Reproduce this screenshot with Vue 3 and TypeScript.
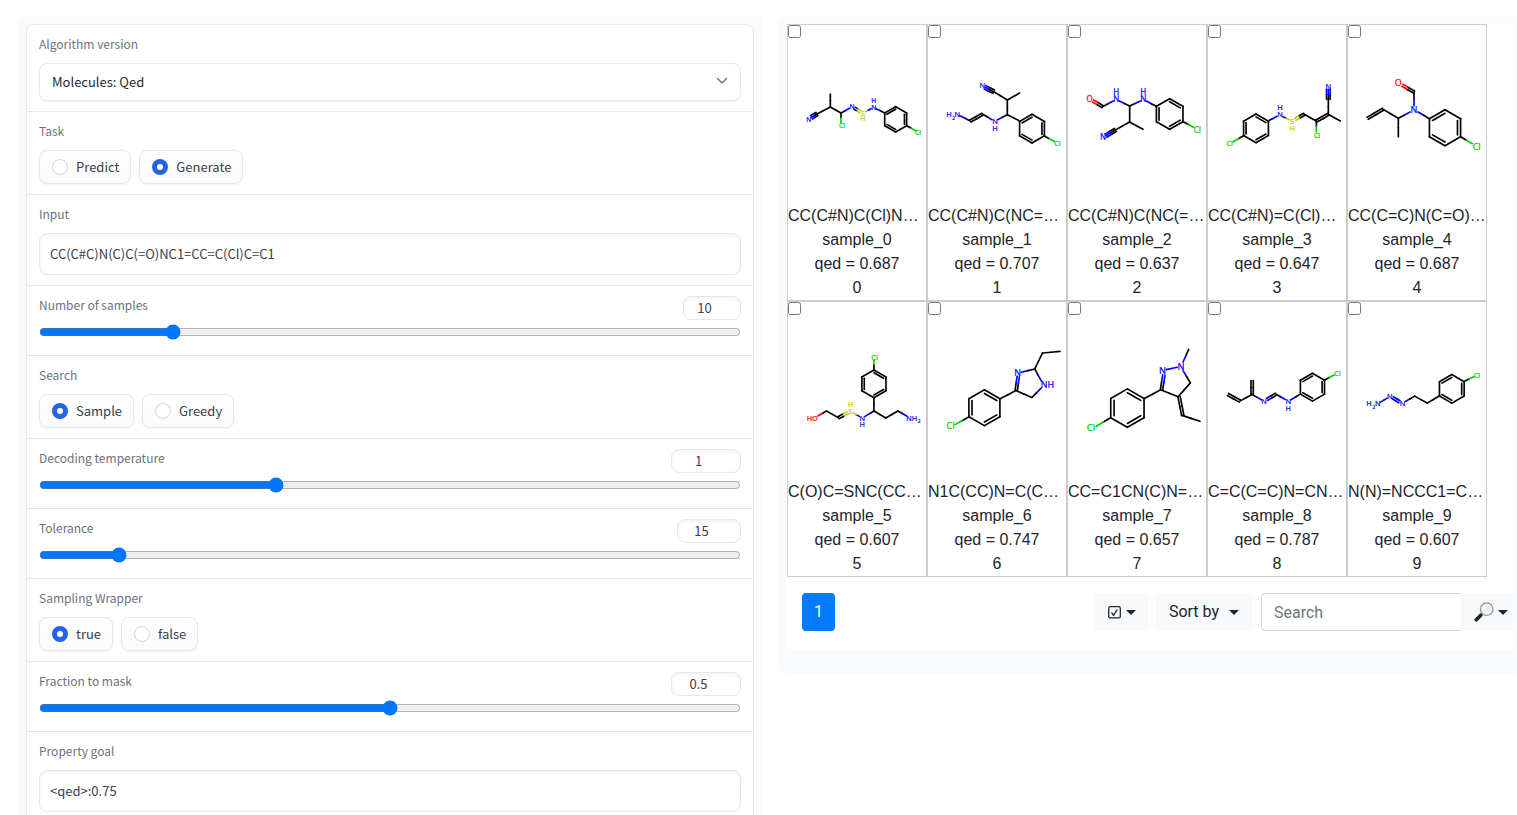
<script setup lang="ts">
import { reactive } from 'vue'

type Colour = 'k' | 'b' | 'g' | 'r' | 'y'
/** order, x1, y1, x2, y2, colour of the first half, colour of the second half */
type Bond = [number, number, number, number, number, Colour?, Colour?]
/** x, y of the centre, text, colour */
type Atom = [number, number, string, Colour]
/** centre x, centre y, radius, parity of the double-bonded edges */
type Ring = [number, number, number, number]

interface Molecule {
  smiles: string
  qed: string
  origin: string
  size: number
  ring: Ring
  bonds: Bond[]
  atoms: Atom[]
}

interface Line { x1: number; y1: number; x2: number; y2: number; c: Colour }

const molecules: Molecule[] = [
  {
    smiles: 'CC(C#N)C(Cl)NC1=CC=C(Cl)C=C1', qed: '0.687', origin: '3 15', size: 20, ring: [326, 298, 38, 1],
    bonds: [
      [1, 130, 222, 130, 261], [1, 130, 261, 90, 282], [3, 90, 282, 73, 292, 'k', 'b'], [1, 130, 261, 162, 279],
      [1, 162, 279, 187, 265, 'k', 'b'], [1, 162, 279, 162, 308, 'k', 'g'], [2, 203, 265, 220, 275, 'b', 'y'],
      [1, 236, 275, 252, 266, 'y', 'b'], [1, 268, 266, 293, 279, 'b', 'k'], [1, 359, 317, 386, 332, 'k', 'g'],
    ],
    atoms: [[65, 298, 'N', 'b'], [165, 317, 'Cl', 'g'], [195, 261, 'N', 'b'], [228, 280, 'S', 'y'], [228, 297, 'H', 'y'], [260, 262, 'N', 'b'], [260, 243, 'H', 'b'], [393, 337, 'Cl', 'g']],
  },
  {
    smiles: 'CC(C#N)C(NC=CN)C1=CC=C(Cl)C=C1', qed: '0.707', origin: '423 15', size: 22, ring: [735, 326, 43, 1],
    bonds: [
      [3, 594, 202, 620, 215, 'b', 'k'], [1, 620, 215, 661, 240], [1, 661, 240, 698, 219], [1, 661, 240, 661, 284],
      [1, 661, 284, 698, 303], [1, 661, 284, 632, 299, 'k', 'b'], [1, 615, 299, 586, 282, 'b', 'k'], [2, 586, 283, 550, 303],
      [1, 550, 303, 518, 287, 'k', 'b'], [1, 772, 348, 802, 364, 'k', 'g'],
    ],
    atoms: [[586, 197, 'N', 'b'], [624, 304, 'N', 'b'], [624, 326, 'H', 'b'], [486, 283, 'H', 'b'], [500, 295, '2', 'b'], [511, 283, 'N', 'b'], [811, 371, 'Cl', 'g']],
  },
  {
    smiles: 'CC(C#N)C(NC(=O))NC1=CC=C(Cl)C=C1', qed: '0.637', origin: '3 15', size: 24, ring: [308, 282, 46, 0],
    bonds: [
      [2, 78, 243, 107, 260, 'r', 'k'], [1, 107, 260, 139, 243, 'k', 'b'], [1, 157, 243, 188, 258, 'b', 'k'],
      [1, 188, 258, 188, 306], [1, 188, 306, 228, 328], [1, 188, 306, 145, 330], [3, 145, 330, 117, 347, 'k', 'b'],
      [1, 188, 258, 220, 243, 'k', 'b'], [1, 238, 243, 268, 259, 'b', 'k'], [1, 349, 305, 380, 322, 'k', 'g'],
    ],
    atoms: [[68, 238, 'O', 'r'], [148, 238, 'N', 'b'], [148, 215, 'H', 'b'], [229, 238, 'N', 'b'], [229, 215, 'H', 'b'], [108, 352, 'N', 'b'], [391, 330, 'Cl', 'g']],
  },
  {
    smiles: 'CC(C#N)=C(Cl)C=SNC1=CC=C(Cl)C=C1', qed: '0.647', origin: '423 15', size: 22, ring: [567, 325, 43, 0],
    bonds: [
      [1, 603, 303, 630, 289, 'k', 'b'], [1, 648, 290, 667, 299, 'b', 'y'], [2, 685, 298, 712, 283, 'y', 'k'],
      [1, 712, 283, 748, 303], [2, 748, 303, 784, 283], [1, 784, 283, 820, 303], [1, 784, 283, 784, 238],
      [3, 784, 238, 784, 208, 'k', 'b'], [1, 748, 303, 748, 335, 'k', 'g'], [1, 530, 347, 498, 365, 'k', 'g'],
    ],
    atoms: [[639, 284, 'N', 'b'], [639, 263, 'H', 'b'], [676, 303, 'S', 'y'], [676, 324, 'H', 'y'], [784, 199, 'N', 'b'], [750, 345, 'Cl', 'g'], [488, 369, 'Cl', 'g']],
  },
  {
    smiles: 'CC(C=C)N(C=O)C1=CC=C(Cl)C=C1', qed: '0.687', origin: '24 15', size: 27, ring: [315, 323, 54, 1],
    bonds: [
      [2, 187, 196, 222, 216, 'r', 'k'], [1, 222, 216, 222, 257, 'k', 'b'], [1, 210, 276, 175, 295, 'b', 'k'],
      [1, 175, 295, 175, 350], [1, 175, 295, 129, 268], [2, 129, 268, 83, 295], [1, 234, 276, 268, 296, 'b', 'k'],
      [1, 362, 350, 397, 371, 'k', 'g'],
    ],
    atoms: [[175, 189, 'O', 'r'], [222, 269, 'N', 'b'], [410, 379, 'Cl', 'g']],
  },
  {
    smiles: 'C(O)C=SNC(CCN)C1=CC=C(Cl)C=C1', qed: '0.607', origin: '3 21', size: 22, ring: [261, 268, 42, 0],
    bonds: [
      [1, 261, 197, 261, 227, 'g', 'k'], [1, 261, 309, 261, 350], [1, 261, 350, 234, 366, 'k', 'b'],
      [1, 217, 366, 199, 356, 'b', 'y'], [2, 181, 356, 154, 370, 'y', 'k'], [1, 154, 370, 118, 350],
      [1, 118, 350, 92, 365, 'k', 'r'], [1, 261, 350, 297, 371], [1, 297, 371, 333, 350], [1, 333, 350, 360, 365, 'k', 'b'],
    ],
    atoms: [[263, 187, 'Cl', 'g'], [226, 371, 'N', 'b'], [226, 391, 'H', 'b'], [190, 351, 'S', 'y'], [190, 331, 'H', 'y'], [75, 371, 'HO', 'r'], [375, 371, 'NH', 'b'], [397, 382, '2', 'b']],
  },
  {
    smiles: 'N1C(CC)N=C(C2=CC=C(Cl)C=C2)C1', qed: '0.747', origin: '423 21', size: 27, ring: [592, 340, 54, 0],
    bonds: [
      [1, 703, 233, 744, 223, 'b', 'k'], [1, 744, 223, 767, 175], [1, 767, 175, 820, 170], [1, 744, 223, 764, 260, 'k', 'b'],
      [1, 763, 281, 735, 309, 'b', 'k'], [1, 735, 309, 687, 288], [2, 688, 288, 694, 246, 'k', 'b'], [1, 687, 288, 639, 313],
      [1, 546, 367, 503, 391, 'k', 'g'],
    ],
    atoms: [[692, 234, 'N', 'b'], [782, 271, 'NH', 'b'], [490, 395, 'Cl', 'g']],
  },
  {
    smiles: 'CC=C1CN(C)N=C1C2=CC=C(Cl)C=C2', qed: '0.657', origin: '3 21', size: 28, ring: [181, 341, 58, 0],
    bonds: [
      [1, 366, 164, 349, 202, 'k', 'b'], [1, 298, 225, 331, 218, 'b', 'b'], [1, 349, 228, 371, 265, 'b', 'k'],
      [1, 371, 265, 334, 307], [1, 334, 307, 281, 286], [2, 284, 286, 291, 241, 'k', 'b'], [1, 281, 286, 232, 312],
      [2, 337, 307, 348, 363], [1, 346, 363, 400, 381], [1, 130, 370, 87, 396, 'k', 'g'],
    ],
    atoms: [[287, 228, 'N', 'b'], [343, 215, 'N', 'b'], [71, 401, 'Cl', 'g']],
  },
  {
    smiles: 'C=C(C=C)N=CNC1=CC=C(Cl)C=C1', qed: '0.787', origin: '423 21', size: 22, ring: [737, 278, 42, 1],
    bonds: [
      [2, 482, 300, 518, 320], [1, 518, 320, 555, 300], [2, 555, 300, 555, 258], [1, 555, 300, 583, 316, 'k', 'b'],
      [2, 600, 315, 627, 299, 'b', 'k'], [1, 627, 299, 655, 315, 'k', 'b'], [1, 672, 316, 700, 299, 'b', 'k'],
      [1, 773, 257, 802, 241, 'k', 'g'],
    ],
    atoms: [[591, 322, 'N', 'b'], [664, 321, 'N', 'b'], [664, 341, 'H', 'b'], [812, 237, 'Cl', 'g']],
  },
  {
    smiles: 'N(N)=NCCC1=CC=C(Cl)C=C1', qed: '0.607', origin: '24 21', size: 22, ring: [336, 283, 43, 1],
    bonds: [
      [1, 121, 323, 141, 311, 'b', 'b'], [2, 158, 310, 178, 322, 'b', 'b'], [1, 196, 321, 224, 305, 'b', 'k'],
      [1, 224, 305, 262, 326], [1, 262, 326, 299, 304], [1, 373, 261, 403, 246, 'k', 'g'],
    ],
    atoms: [[86, 328, 'H', 'b'], [101, 340, '2', 'b'], [113, 328, 'N', 'b'], [149, 305, 'N', 'b'], [187, 327, 'N', 'b'], [412, 242, 'Cl', 'g']],
  },
]

function bondLines([order, x1, y1, x2, y2, a = 'k', b = a]: Bond): Line[] {
  const length = Math.hypot(x2 - x1, y2 - y1)
  const nx = -(y2 - y1) / length
  const ny = (x2 - x1) / length
  const shifts = order === 1 ? [0] : order === 2 ? [-3.5, 3.5] : [-5.5, 0, 5.5]
  return shifts.flatMap((s) => {
    const mx = (x1 + x2) / 2
    const my = (y1 + y2) / 2
    return [
      { x1: x1 + nx * s, y1: y1 + ny * s, x2: mx + nx * s, y2: my + ny * s, c: a },
      { x1: mx + nx * s, y1: my + ny * s, x2: x2 + nx * s, y2: y2 + ny * s, c: b },
    ]
  })
}

function ringLines([cx, cy, r, parity]: Ring): Line[] {
  const vertex = (i: number, k: number) => {
    const t = (i * Math.PI) / 3
    return [cx + Math.sin(t) * r * k, cy - Math.cos(t) * r * k]
  }
  const lines: Line[] = []
  for (let i = 0; i < 6; i++) {
    for (const k of i % 2 === parity ? [1, 0.8] : [1]) {
      const [x1, y1] = vertex(i, k)
      const [x2, y2] = vertex(i + 1, k)
      lines.push({ x1, y1, x2, y2, c: 'k' })
    }
  }
  return lines
}

const drawings = molecules.map((m) => [...ringLines(m.ring), ...m.bonds.flatMap(bondLines)])

const form = reactive({
  version: 'Molecules: Qed',
  task: 'Generate',
  input: 'CC(C#C)N(C)C(=O)NC1=CC=C(Cl)C=C1',
  samples: 10,
  search: 'Sample',
  temperature: 1,
  tolerance: 15,
  wrapper: 'true',
  fraction: 0.5,
  goal: '<qed>:0.75',
  query: '',
})

type Field =
  | { kind: 'radio'; key: 'task' | 'search' | 'wrapper'; label: string; options: string[] }
  | { kind: 'range'; key: 'samples' | 'temperature' | 'tolerance' | 'fraction'; label: string; min: number; max: number; step: number; size: string }
  | { kind: 'text'; key: 'input' | 'goal'; label: string }

const fields: Field[] = [
  { kind: 'radio', key: 'task', label: 'Task', options: ['Predict', 'Generate'] },
  { kind: 'text', key: 'input', label: 'Input' },
  { kind: 'range', key: 'samples', label: 'Number of samples', min: 1, max: 50, step: 1, size: 'small' },
  { kind: 'radio', key: 'search', label: 'Search', options: ['Sample', 'Greedy'] },
  { kind: 'range', key: 'temperature', label: 'Decoding temperature', min: 0.5, max: 2, step: 0.1, size: 'large' },
  { kind: 'range', key: 'tolerance', label: 'Tolerance', min: 5, max: 100, step: 1, size: 'medium' },
  { kind: 'radio', key: 'wrapper', label: 'Sampling Wrapper', options: ['true', 'false'] },
  { kind: 'range', key: 'fraction', label: 'Fraction to mask', min: 0, max: 1, step: 0.1, size: 'large' },
  { kind: 'text', key: 'goal', label: 'Property goal' },
]
</script>

<template>
  <main class="page">
    <section class="panel settings">
      <form class="card" @submit.prevent>
        <div class="block">
          <label class="caption" for="version">Algorithm version</label>
          <div class="select-wrap">
            <select id="version" v-model="form.version" class="select">
              <option>Molecules: Qed</option>
            </select>
            <svg class="chevron" viewBox="0 0 12 8" aria-hidden="true"><path d="M1.5 1.5 6 6l4.500-4.500" /></svg>
          </div>
        </div>
        <template v-for="f in fields" :key="f.key">
          <div v-if="f.kind === 'radio'" class="block" role="radiogroup" :aria-label="f.label">
            <span class="caption">{{ f.label }}</span>
            <div class="options">
              <label v-for="o in f.options" :key="o" class="option">
                <input v-model="form[f.key]" type="radio" :name="f.key" :value="o" class="radio" />
                <span>{{ o }}</span>
              </label>
            </div>
          </div>
          <div v-else-if="f.kind === 'text'" class="block">
            <label class="caption" :for="f.key">{{ f.label }}</label>
            <input :id="f.key" v-model="form[f.key]" type="text" class="text" spellcheck="false" />
          </div>
          <div v-else class="block">
            <div class="head">
              <label class="caption" :for="f.key">{{ f.label }}</label>
              <input v-model.number="form[f.key]" type="number" :class="['number', f.size]" :min="f.min" :max="f.max" :step="f.step" :aria-label="f.label + ' value'" />
            </div>
            <input :id="f.key" v-model.number="form[f.key]" type="range" class="range" :min="f.min" :max="f.max" :step="f.step" />
          </div>
        </template>
      </form>
    </section>

    <section class="panel results">
      <div class="sheet">
        <div class="grid">
          <article v-for="(m, i) in molecules" :key="i" class="cell">
            <input type="checkbox" class="tick" :aria-label="'Select sample_' + i" />
            <svg class="drawing" :viewBox="m.origin + ' 414 537'" preserveAspectRatio="xMidYMin meet" role="img" :aria-label="m.smiles">
              <line v-for="(l, n) in drawings[i]" :key="n" :class="'bond-' + l.c" :x1="l.x1" :y1="l.y1" :x2="l.x2" :y2="l.y2" />
              <text
                v-for="(a, n) in m.atoms" :key="'a' + n" :class="'atom-' + a[3]" :x="a[0]" :y="a[1]"
                :dy="a[2] === '2' ? m.size * 0.24 : m.size * 0.36" :font-size="a[2] === '2' ? m.size * 0.65 : m.size"
              >{{ a[2] }}</text>
            </svg>
            <div class="smiles">{{ m.smiles }}</div>
            <div>sample_{{ i }}</div>
            <div>qed = {{ m.qed }}</div>
            <div>{{ i }}</div>
          </article>
        </div>
        <div class="toolbar">
          <button type="button" class="pager">1</button>
          <button type="button" class="btn check" aria-label="Selection">
            <svg class="ballot" viewBox="0 0 13 14" aria-hidden="true">
              <rect x="0.700" y="1.700" width="11.600" height="11.200" rx="1.500" />
              <path d="M3.500 7.500 5.500 10.300 9.300 4.300" />
            </svg>
            <span class="caret"></span>
          </button>
          <button type="button" class="btn sort">Sort by <span class="caret"></span></button>
          <div class="search">
            <input v-model="form.query" type="text" class="query" placeholder="Search" aria-label="Search" />
            <button type="button" class="btn find" aria-label="Search options">
              <svg class="lens" viewBox="0 0 20 20" aria-hidden="true">
                <path class="neck" d="M6 14 9 11" />
                <path class="grip" d="M2.300 17.700 6.800 13.200" />
                <circle cx="12.700" cy="7.200" r="6.300" />
                <path class="shine" d="M8.800 6.200a4.300 4.300 0 0 1 3-3" />
              </svg>
              <span class="caret"></span>
            </button>
          </div>
        </div>
      </div>
    </section>
  </main>
</template>

<style>
body {
  margin: 0;
  background: #fff;
  overflow: hidden;
}
</style>

<style scoped>
* {
  box-sizing: border-box;
}
.page {
  display: grid;
  grid-template-columns: minmax(0, 1fr) minmax(0, 1fr);
  align-items: start;
  gap: 16px;
  width: calc(100% + 5px);
  height: 100vh;
  padding: 16px 0 0 18px;
  overflow: hidden auto;
  scrollbar-width: none;
  font-family: "Noto Sans CJK JP", "Noto Sans", sans-serif;
  font-size: 13px;
  line-height: 20px;
  color: #374151;
}
.panel {
  padding: 8px;
  border-radius: 8px;
  background: #f9fafb;
}
.results {
  padding-bottom: 24px;
}
.card {
  border: 1px solid #e5e7eb;
  border-radius: 8px;
  background: #fff;
}
.block {
  padding: 10px 12px;
}
.block + .block {
  border-top: 1px solid #e5e7eb;
}
.caption {
  display: block;
  margin-bottom: 10px;
  font-size: 12px;
  line-height: 18px;
  color: #6b7280;
}
.head {
  display: flex;
  justify-content: space-between;
  align-items: flex-start;
}
.head .caption {
  margin: 0;
}
.select-wrap {
  position: relative;
}
.select,
.text,
.number {
  display: block;
  border: 1px solid #e5e7eb;
  border-radius: 8px;
  background: #fff;
  color: #374151;
  font: inherit;
}
.select {
  width: 100%;
  height: 38px;
  padding: 0 12px;
  appearance: none;
  color: #1f2937;
  box-shadow: 0 1px 2px rgba(0, 0, 0, 0.06);
}
.chevron {
  position: absolute;
  top: 14px;
  right: 13px;
  width: 12px;
  height: 8px;
  fill: none;
  stroke: #6b7280;
  stroke-width: 1.500;
  stroke-linecap: round;
  pointer-events: none;
}
.text {
  width: 100%;
  height: 42px;
  padding: 0 10px 2px;
  box-shadow: inset 0 2px 4px rgba(0, 0, 0, 0.05);
}
.number {
  height: 24px;
  padding: 0 6px 2px;
  text-align: center;
  box-shadow: inset 0 2px 4px rgba(0, 0, 0, 0.05);
}
.small {
  width: 58px;
}
.medium {
  width: 64px;
}
.large {
  width: 70px;
}
.range {
  display: block;
  width: 100%;
  height: 16px;
  margin: 4px 0 5px;
  accent-color: #0075ff;
}
.options {
  display: flex;
  gap: 8px;
}
.option {
  display: flex;
  align-items: center;
  gap: 8px;
  height: 34px;
  padding: 0 11px 0 12px;
  border: 1px solid #e5e7eb;
  border-radius: 8px;
  background: linear-gradient(#fff, #f9fafb);
  box-shadow: 0 1px 2px rgba(0, 0, 0, 0.05);
}
.radio {
  width: 16px;
  height: 16px;
  margin: 0;
  appearance: none;
  border: 1px solid #d1d5db;
  border-radius: 50%;
  background: #fff;
}
.radio:checked {
  border: 5px solid #2563eb;
}
.sheet {
  padding: 0 0 18px 1px;
  background: #fff;
  overflow: hidden;
}
.grid {
  display: grid;
  grid-template-columns: repeat(5, 140px);
  grid-template-rows: 277px 276px;
}
.cell {
  position: relative;
  display: flex;
  flex-direction: column;
  min-width: 0;
  border: 1px solid #ccc;
  font: 16px/24px "Liberation Sans", Arial, sans-serif;
  text-align: center;
  color: #212529;
}
.smiles {
  overflow: hidden;
  text-overflow: ellipsis;
  white-space: nowrap;
}
.tick {
  position: absolute;
  top: 0;
  left: 0;
  width: 13px;
  height: 13px;
  margin: 0;
}
.drawing {
  flex: 1;
  display: block;
  width: 100%;
  min-height: 0;
  font-family: "Noto Sans", sans-serif;
  text-anchor: middle;
  stroke-width: 5;
  stroke-linecap: round;
}
.drawing text {
  stroke-width: 0.600;
}
.bond-k { stroke: #000; }
.bond-b { stroke: #00f; }
.bond-g { stroke: #0c0; }
.bond-r { stroke: #f00; }
.bond-y { stroke: #cc0; }
.atom-b { fill: #00f; stroke: #00f; }
.atom-g { fill: #0c0; stroke: #0c0; }
.atom-r { fill: #f00; stroke: #f00; }
.atom-y { fill: #cc0; stroke: #cc0; }
.toolbar {
  display: flex;
  margin-top: 16px;
  padding-left: 15px;
  font: 16px/24px Roboto, sans-serif;
}
.pager,
.btn {
  height: 38px;
  padding: 0 12px;
  border: 0;
  border-radius: 4px;
  background: #f8f9fa;
  color: #212529;
  font: inherit;
}
.pager {
  background: #007bff;
  color: #fff;
}
.btn {
  display: flex;
  align-items: center;
  white-space: nowrap;
}
.check {
  gap: 5px;
  margin-left: auto;
  padding: 0 12px 0 14px;
}
.ballot {
  width: 13px;
  height: 14px;
  fill: none;
  stroke: #212529;
  stroke-width: 1.300;
}
.caret {
  border: 5px solid transparent;
  border-top-color: currentColor;
  border-bottom: 0;
}
.sort {
  gap: 10px;
  margin-left: 8px;
  padding: 0 13px;
}
.search {
  display: flex;
  margin-left: 9px;
}
.query {
  width: 200px;
  height: 38px;
  padding: 0 12px;
  border: 1px solid #ced4da;
  border-right: 0;
  border-radius: 4px 0 0 4px;
  background: #fff;
  color: #495057;
  font: inherit;
}
.query::placeholder {
  color: #6c757d;
  opacity: 1;
}
.find {
  gap: 4px;
  width: 53px;
  padding: 0 0 0 13px;
  border-radius: 0;
}
.lens {
  width: 20px;
  height: 20px;
  fill: none;
  stroke-linecap: round;
}
.lens circle {
  fill: #eceff2;
  stroke: #8d959d;
  stroke-width: 1.200;
}
.grip {
  stroke: #222;
  stroke-width: 3.600;
}
.neck {
  stroke: #777;
  stroke-width: 2;
}
.shine {
  stroke: #fff;
  stroke-width: 1.500;
}
</style>
